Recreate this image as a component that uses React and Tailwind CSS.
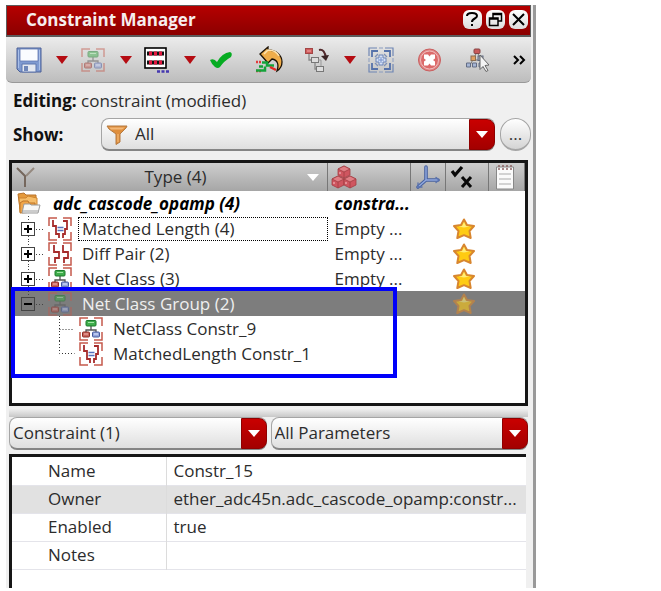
import React from "react";

const brackets = "M1 9V1h8M15 1h8v8M1 15v8h8M23 15v8h-8";

function NetClassIcon({ className = "" }) {
  return (
    <svg viewBox="0 0 24 24" className={`h-6 w-6 shrink-0 ${className}`} fill="none" aria-hidden="true">
      <path d={brackets} stroke="#c55a4c" strokeWidth="1.5" />
      <path d="M12 9v4M7 16v-3h10v3" stroke="#555" strokeWidth="1.3" />
      <rect x="7" y="3.5" width="10" height="5.5" rx="1" fill="#3fae4c" stroke="#1c7a2b" />
      <path d="M9 5.5h6" stroke="#a5e6a8" />
      <rect x="3.5" y="15" width="7" height="5" rx="1" fill="#c9645c" stroke="#8c2a22" />
      <rect x="13.5" y="15" width="7" height="5" rx="1" fill="#93a5dc" stroke="#44589c" />
      <path d="M5 17h4" stroke="#f0b5ae" />
      <path d="M15 17h4" stroke="#dfe6ff" />
    </svg>
  );
}

function MatchedLengthIcon() {
  return (
    <svg viewBox="0 0 24 24" className="h-6 w-6 shrink-0" fill="none" aria-hidden="true">
      <path d={brackets} stroke="#c55a4c" strokeWidth="1.5" />
      <path d="M5 3v6h3v8h3v4M15 4h4v8h-2v5h-2v4" stroke="#a62c2c" strokeWidth="1.8" />
      <path d="M9.500 10.500h6M9.500 13.500h6" stroke="#5571bd" strokeWidth="1.500" />
    </svg>
  );
}

function DiffPairIcon() {
  return (
    <svg viewBox="0 0 24 24" className="h-6 w-6 shrink-0" fill="none" aria-hidden="true">
      <path d={brackets} stroke="#c55a4c" strokeWidth="1.5" />
      <path d="M6 3v7h5v6H7v5M15 3v7h5v6h-4v5" stroke="#a62c2c" strokeWidth="1.800" />
    </svg>
  );
}

function FolderIcon() {
  return (
    <svg viewBox="0 0 26 24" className="h-6 w-[26px] shrink-0" aria-hidden="true">
      <path d="M2 2l6-1 2 2h10v14H4z" fill="#e59a3c" stroke="#b8722a" />
      <path d="M3 6h7l2-2 9 2v14H4z" fill="#f6bd69" stroke="#cd8530" />
      <path d="M4 21V11l3-2h5l1 2h6v9z" fill="#f0a548" stroke="#bd7427" />
      <path d="M8 12h6l1 1h9l-2 8H6z" fill="#f7f7f5" stroke="#999" />
      <path d="M7 19h15" stroke="#ccc" strokeWidth="2" />
    </svg>
  );
}

function StarIcon({ className = "" }) {
  return (
    <svg viewBox="0 0 24 24" className={`mx-auto h-6 w-6 ${className}`} aria-hidden="true">
      <path d="M12 2.500l3 5.500 7 1-4.500 5 1.200 7-6.700-2.800-6.700 2.800L6.500 14 2 9l7-1z" fill="#ffcb12" stroke="#d8862f" strokeWidth="2" strokeLinejoin="round" />
      <path d="M12 5l1.900 4 4 .6-5.900 1-5.500-1 3.600-.6z" fill="#ffed7a" />
    </svg>
  );
}

function FunnelIcon() {
  return (
    <svg viewBox="0 0 22 20" className="h-5 w-[22px]" aria-hidden="true">
      <path d="M1 1h20l-1 2-6 6v8l-4 2.500V9L3 4z" fill="#df8e3c" stroke="#b57b42" />
      <path d="M3 2.500h16l-3 2H5z" fill="#f3b878" />
      <path d="M12 9v8" stroke="#f1b26c" strokeWidth="1.400" />
    </svg>
  );
}

function SaveIcon() {
  return (
    <svg viewBox="0 0 26 26" className="h-[26px] w-[26px]" aria-hidden="true">
      <path d="M1 1h24v24H4l-3-3z" fill="#7f9ad0" stroke="#4a5f96" />
      <path d="M4 2h18v12H4z" fill="#fafcff" stroke="#5f76ae" strokeWidth=".8" />
      <path d="M6 17h14v8H6z" fill="#e4e8f0" stroke="#5f76ae" />
      <path d="M8 19h4v5H8z" fill="#6f86b8" />
      <path d="M2.500 3v18M23.500 3v20" stroke="#a9bfe8" />
    </svg>
  );
}

function ArrayIcon() {
  return (
    <svg viewBox="0 0 28 28" className="h-7 w-7" aria-hidden="true">
      <rect x="2" y="2" width="21" height="20" fill="#fff" stroke="#000" strokeWidth="1.600" />
      <path d="M4 5.500h17v4H4zM4 14.500h17v4H4z" fill="#111" />
      <path d="M6 5.500h3v4H6zM11 5.500h3v4h-3zM16 5.500h3v4h-3zM6 14.500h3v4H6zM11 14.500h3v4h-3zM16 14.500h3v4h-3z" fill="#e5173f" />
      <path d="M14 25.500h3M18.500 25.500h3M23 25.500h3" stroke="#4538b0" strokeWidth="2.400" />
    </svg>
  );
}

function CheckIcon() {
  return (
    <svg viewBox="0 0 28 28" className="h-7 w-7" aria-hidden="true">
      <path d="M3 14q4-2 7 2Q15 7 23 6q3 1 1 5-7 4-11 10-2 2-5 0-3-2-5-7z" fill="#06ac22" />
    </svg>
  );
}

function UndoIcon() {
  return (
    <svg viewBox="0 0 28 28" className="h-7 w-7" fill="none" aria-hidden="true">
      <path d="M5 8l8-7v3c8 0 14 5 14 12 0 4-2 7-5 9 2-6 1-11-5-12l-4 4z" fill="#efad4a" stroke="#1c1206" strokeWidth="1.300" />
      <path d="M9 8l4-4c5 0 9 2 11 6" stroke="#ffe3ad" strokeWidth="1.600" />
      <path d="M1 16h6M1 25h6" stroke="#e23b3b" strokeWidth="2.500" strokeDasharray="2 1" />
      <path d="M7 16.500h5v3h7M1 24.500h9v-4M4 20.500h4" stroke="#14a33a" strokeWidth="2.500" />
      <path d="M15 21l6 3" stroke="#e22a24" strokeWidth="2.500" />
    </svg>
  );
}

function HierarchyIcon() {
  return (
    <svg viewBox="0 0 28 28" className="h-7 w-7" fill="none" aria-hidden="true">
      <path d="M6 8v6h3M12 17v6h2" stroke="#888" strokeWidth="1.300" />
      <rect x="2.500" y="2.500" width="7" height="5" fill="#d05b5b" stroke="#a34646" />
      <path d="M4 5h4" stroke="#efaaaa" />
      <rect x="8.500" y="11.500" width="7" height="5" fill="#ddd" stroke="#777" />
      <rect x="13.500" y="20.500" width="7" height="5" fill="#ddd" stroke="#777" />
      <path d="M15 14h3v6" stroke="#999" />
      <path d="M16 4c4-1 6 2 7 8" stroke="#532a2c" strokeWidth="2" />
      <path d="M18 10l5 5 3-6z" fill="#3b2425" />
    </svg>
  );
}

function FitIcon() {
  return (
    <svg viewBox="0 0 28 28" className="h-7 w-7" fill="none" aria-hidden="true">
      <path d="M10 2H2v8M18 2h8v8M2 18v8h8M26 18v8h-8" stroke="#6f86b4" strokeWidth="1.200" />
      <path d="M12 2h4M12 26h4M2 12v4M26 12v4" stroke="#8a9cbf" />
      <path d="M5 11V5h6M17 5h6v6M5 17v6h6M23 17v6h-6" stroke="#5672aa" strokeWidth="1.800" />
      <path d="M8 11l3-3M20 11l-3-3M8 17l3 3M20 17l-3 3" stroke="#7d90b8" strokeWidth="1.300" />
      <path d="M12 9h4v3h3v4h-3v3h-4v-3H9v-4h3z" fill="#d5e0f5" stroke="#6b84b8" />
      <path d="M14 11v6M11 14h6" stroke="#7893cc" />
    </svg>
  );
}

function StopIcon() {
  return (
    <svg viewBox="0 0 28 28" className="h-7 w-7" aria-hidden="true">
      <circle cx="14.500" cy="14" r="11" fill="#e08484" stroke="#c95f5f" />
      <circle cx="14.500" cy="14" r="9" fill="#dc6a6a" stroke="#f0bcbc" />
      <path d="M9 8.500h4l1.500 2 1.500-2h4v4l-2 1.500 2 1.500v4h-4l-1.500-2-1.500 2H9v-4l2-1.500-2-1.500z" fill="#fff" />
    </svg>
  );
}

function SelectTreeIcon() {
  return (
    <svg viewBox="0 0 28 28" className="h-7 w-7" aria-hidden="true">
      <path d="M14 6L6 21M14 6l8 15M9 14h10" stroke="#777" fill="none" />
      <rect x="11" y="3" width="6" height="4.500" rx="1" fill="#c95a5a" stroke="#884545" />
      <rect x="8" y="10" width="4.500" height="4.500" fill="#e0a062" stroke="#8d6e50" />
      <rect x="15" y="10" width="5" height="4.500" fill="#a3a8b5" stroke="#616a80" />
      <path d="M3.500 17h4v4h-4zM9.500 17h4v4h-4zM16 17h4v4h-4z" fill="#a5b5d4" stroke="#626c84" />
      <path d="M17 9l9 10-4 .5 3 5-2 1-3-5-3 3z" fill="#f4f4f4" stroke="#666" />
    </svg>
  );
}

function CubesIcon() {
  return (
    <svg viewBox="0 0 26 24" className="h-6 w-[26px]" stroke="#a13c42" strokeWidth=".8" aria-hidden="true">
      {[[7, 1], [1, 11], [13, 11]].map(([x, y]) => (
        <g key={x} transform={`translate(${x} ${y})`}>
          <path d="M0 3l6-3 6 3v6l-6 3-6-3z" fill="#cf5660" />
          <path d="M0 3l6-3 6 3-6 3z" fill="#e07f85" />
          <path d="M6 6v6" fill="none" />
          <path d="M2 6v2" stroke="#eaa0a4" strokeWidth="1.500" />
        </g>
      ))}
    </svg>
  );
}

function AxesIcon() {
  return (
    <svg viewBox="0 0 26 26" className="h-[26px] w-[26px]" fill="none" strokeLinecap="round" aria-hidden="true">
      <path d="M11 3v13h12M11 16l-8 7" stroke="#48619f" strokeWidth="3.600" />
      <path d="M11 3v13h12M11 16l-8 7" stroke="#91a9df" strokeWidth="1.400" />
      <path d="M21 13.500l3 2.500-3 2.500M3 19v4h4" stroke="#5871ad" strokeWidth="1.300" />
    </svg>
  );
}

function CheckCrossIcon() {
  return (
    <svg viewBox="0 0 26 26" className="h-[26px] w-[26px]" fill="none" stroke="#080808" aria-hidden="true">
      <path d="M2 7l3 4 7-8" strokeWidth="3.200" />
      <path d="M12 13l9 10M21 13l-9 10" strokeWidth="3" />
    </svg>
  );
}

function NotepadIcon() {
  return (
    <svg viewBox="0 0 20 26" className="h-[26px] w-5" aria-hidden="true">
      <path d="M1.500 3h17v22h-17z" fill="#fafafa" stroke="#888" />
      <path d="M4 1v5M8 1v5M12 1v5M16 1v5" stroke="#8d6464" strokeWidth="1.500" strokeDasharray="2 1" />
      <path d="M4 10h12M4 15h12M4 20h12" stroke="#aaa" />
    </svg>
  );
}

function ToolButton({ label, className = "", children }) {
  return (
    <button type="button" aria-label={label} className={`flex h-7 w-7 shrink-0 items-center justify-center ${className}`}>
      {children}
    </button>
  );
}

function MenuArrow({ label }) {
  return (
    <button type="button" aria-label={label} className="ml-[11px] flex h-7 w-4 shrink-0 items-center justify-center">
      <svg viewBox="0 0 12 8" className="h-2 w-3" aria-hidden="true">
        <path d="M0 0h12L6 8z" fill="#b50c12" />
      </svg>
    </button>
  );
}

function Combo({ id, label, value, icon, className = "" }) {
  return (
    <div className={`relative h-[33px] min-w-0 ${className}`}>
      <select
        id={id}
        aria-label={label}
        className={`h-full w-full appearance-none rounded-lg border border-b-2 border-[#a5a5a5] border-b-[#858585] bg-linear-to-b from-white to-[#dfdfdf] pr-7 ${icon ? "pl-[33px]" : "pl-[3px]"}`}
      >
        <option>{value}</option>
      </select>
      {icon && <span className="pointer-events-none absolute top-[7px] left-[5px]">{icon}</span>}
      <span className="pointer-events-none absolute inset-y-px right-0 flex w-[26px] items-center justify-center rounded-r-lg border border-[#8f0000] bg-linear-to-b from-[#c90000] to-[#a30000]">
        <svg viewBox="0 0 12 7" className="h-[7px] w-3" aria-hidden="true">
          <path d="M0 0h12L6 7z" fill="#fff" />
        </svg>
      </span>
    </div>
  );
}

function Expander({ open }) {
  return (
    <svg viewBox="0 0 32 25" className="h-[25px] w-8 shrink-0" fill="none" aria-hidden="true">
      <path d={open ? "M12.500 0v6" : "M12.500 0v6M12.500 20v5"} stroke="#444" strokeDasharray="1 2" />
      <path d="M20 13.500h8" stroke="#444" strokeDasharray="1 2" />
      <rect x="5.500" y="6.500" width="13" height="13" fill={open ? "#7a7a7a" : "#fff"} stroke="#444" />
      <path d={open ? "M8 13h8" : "M8 13h8M12 9v8"} stroke="#000" strokeWidth="2" />
    </svg>
  );
}

function Branch({ last }) {
  return (
    <svg viewBox="0 0 24 25" className="ml-10 h-[25px] w-6 shrink-0" fill="none" aria-hidden="true">
      <path d={last ? "M4.500 0v12.500h15" : "M4.500 0v25M4.500 13.500h15"} stroke="#333" strokeDasharray="1 2" />
    </svg>
  );
}

const groups = [
  { name: "Matched Length (4)", icon: <MatchedLengthIcon />, focused: true },
  { name: "Diff Pair (2)", icon: <DiffPairIcon /> },
  { name: "Net Class (3)", icon: <NetClassIcon /> },
];

const members = [
  { name: "NetClass Constr_9", icon: <NetClassIcon /> },
  { name: "MatchedLength Constr_1", icon: <MatchedLengthIcon /> },
];

const properties = [
  ["Name", "Constr_15"],
  ["Owner", "ether_adc45n.adc_cascode_opamp:constr..."],
  ["Enabled", "true"],
  ["Notes", ""],
];

const windowButton = "flex h-[19px] w-[19px] items-center justify-center rounded-md bg-linear-to-b from-white to-[#dcdcdc]";
const headCell = "border-r border-[#777] p-0 font-normal";

function ConstraintTree() {
  return (
    <div className="relative mt-[9px] mr-[5px] ml-[3px] h-[246px] border-[3px] border-[#161616] bg-white">
      <table className="w-full table-fixed border-collapse">
        <colgroup>
          <col />
          <col className="w-[83px]" />
          <col className="w-[35px]" />
          <col className="w-[43px]" />
          <col className="w-[36px]" />
        </colgroup>
        <thead>
          <tr className="h-7 bg-linear-to-b from-[#cecece] to-[#a6a6a6]">
            <th className={headCell}>
              <div className="flex items-center pr-2 pl-1">
                <svg viewBox="0 0 20 22" className="h-[22px] w-5" fill="none" strokeWidth="2" aria-hidden="true">
                  <path d="M18 2l-8 8" stroke="#95897f" />
                  <path d="M1 2l8 8v11" stroke="#75675d" />
                </svg>
                <span className="flex-1 pl-2 text-center">Type (4)</span>
                <svg viewBox="0 0 12 7" className="h-[7px] w-3" aria-hidden="true">
                  <path d="M0 0h12L6 7z" fill="#fff" />
                </svg>
              </div>
            </th>
            <th aria-label="Members" className={headCell}><div className="pl-[3px]"><CubesIcon /></div></th>
            <th aria-label="Axis" className={headCell}><div className="flex justify-center"><AxesIcon /></div></th>
            <th aria-label="Status" className={headCell}><div className="pl-1"><CheckCrossIcon /></div></th>
            <th aria-label="Notes" className={headCell}><div className="flex pl-[6px]"><NotepadIcon /></div></th>
          </tr>
        </thead>
        <tbody>
          <tr className="h-[25px] font-bold text-black italic">
            <td className="p-0"><div className="flex h-[25px] items-center gap-[11px] pl-1"><FolderIcon />adc_cascode_opamp (4)</div></td>
            <td className="p-0 pl-[7px]">constra...</td>
            <td colSpan={3} className="p-0" />
          </tr>
          {groups.map((g) => (
            <tr key={g.name} className="h-[25px]">
              <td className="p-0">
                <div className="flex h-[25px] items-center pl-1">
                  <Expander />
                  {g.icon}
                  <span className={`ml-[6px] flex-1 pl-[3px] leading-[22px] ${g.focused ? "border border-dotted border-black" : "border border-transparent"}`}>{g.name}</span>
                </div>
              </td>
              <td className="p-0 pl-[7px]">Empty ...</td>
              <td className="p-0" />
              <td className="p-0"><div className="-ml-[6px]"><StarIcon /></div></td>
              <td className="p-0" />
            </tr>
          ))}
          <tr className="h-[25px] bg-[#7d7d7d] text-[#efefef]" aria-selected="true">
            <td className="p-0">
              <div className="flex h-[25px] items-center pl-1">
                <Expander open />
                <NetClassIcon className="opacity-50" />
                <span className="ml-[10px]">Net Class Group (2)</span>
              </div>
            </td>
            <td colSpan={2} className="p-0" />
            <td className="p-0"><div className="-ml-[6px]"><StarIcon className="opacity-60" /></div></td>
            <td className="p-0" />
          </tr>
          {members.map((m, i) => (
            <tr key={m.name} className="h-[25px]">
              <td colSpan={5} className="p-0">
                <div className="flex h-[25px] items-center pl-[3px]">
                  <Branch last={i === members.length - 1} />
                  {m.icon}
                  <span className="ml-[10px]">{m.name}</span>
                </div>
              </td>
            </tr>
          ))}
        </tbody>
      </table>
      <div className="pointer-events-none absolute top-[124px] -left-px h-[91px] w-[386px] border-4 border-[#0000fa]" />
    </div>
  );
}

export default function App() {
  return (
    <div className="bg-white pt-[5px] pr-[125px] pb-[3px] pl-[6px] font-['Open_Sans','Noto_Sans',sans-serif] text-[17px] leading-[22px] text-[#2c2c2c]">
      <main className="border-r-[3px] border-[#999] bg-[#f0f0f0]">
        <header className="mr-[2px] flex h-8 items-center border border-b-2 border-[#5c5c5c] bg-linear-to-b from-[#b50000] to-[#8c0000] pr-[2px] pb-[2px] pl-[19px]">
          <h1 className="flex-1 font-bold text-[#f6eeee]">Constraint Manager</h1>
          <div className="flex gap-1 text-black">
            <button type="button" aria-label="Help" className={windowButton}>
              <svg viewBox="0 0 19 19" className="h-[19px] w-[19px]" fill="none" stroke="#000" strokeWidth="2" aria-hidden="true">
                <path d="M4 6c0-4 10-4 10 0 0 3-5 2-5 6M9 14v2" />
              </svg>
            </button>
            <button type="button" aria-label="Restore" className={windowButton}>
              <svg viewBox="0 0 19 19" className="h-[19px] w-[19px]" fill="none" stroke="#000" strokeWidth="1.500" aria-hidden="true">
                <path d="M7 8V3.500h8.500V11H12M7 4.500h8M3.500 8H12v7.500H3.500zM3.500 9H12" />
              </svg>
            </button>
            <button type="button" aria-label="Close" className={windowButton}>
              <svg viewBox="0 0 19 19" className="h-[19px] w-[19px]" stroke="#000" strokeWidth="2" aria-hidden="true">
                <path d="M4 4l11 11M15 4L4 15" />
              </svg>
            </button>
          </div>
        </header>

        <div role="toolbar" aria-label="Constraint tools" className="mr-[2px] flex h-[46px] items-center rounded-b-md border-b border-[#999] bg-linear-to-b from-[#ececec] to-[#bdbdbd] pl-[9px]">
          <ToolButton label="Save"><SaveIcon /></ToolButton>
          <MenuArrow label="Save options" />
          <ToolButton label="New constraint" className="ml-[9px]"><NetClassIcon className="opacity-50" /></ToolButton>
          <MenuArrow label="New constraint options" />
          <ToolButton label="Array" className="ml-[9px]"><ArrayIcon /></ToolButton>
          <MenuArrow label="Array options" />
          <ToolButton label="Apply" className="ml-[9px]"><CheckIcon /></ToolButton>
          <ToolButton label="Revert" className="ml-5"><UndoIcon /></ToolButton>
          <ToolButton label="Hierarchy" className="ml-5"><HierarchyIcon /></ToolButton>
          <MenuArrow label="Hierarchy options" />
          <ToolButton label="Fit" className="ml-[9px]"><FitIcon /></ToolButton>
          <ToolButton label="Delete" className="ml-5"><StopIcon /></ToolButton>
          <ToolButton label="Select members" className="ml-5"><SelectTreeIcon /></ToolButton>
          <button type="button" aria-label="More tools" className="ml-5 flex h-7 w-4 shrink-0 items-center justify-center">
            <svg viewBox="0 0 14 10" className="h-[10px] w-[14px]" fill="none" stroke="#000" strokeWidth="2" aria-hidden="true">
              <path d="M2 1l4 4-4 4M8 1l4 4-4 4" />
            </svg>
          </button>
        </div>

        <p className="pt-[7px] pl-[7px]"><b className="text-[#111]">Editing:</b> constraint (modified)</p>

        <div className="mt-[6px] mr-[2px] flex items-center pl-[7px]">
          <label htmlFor="show" className="w-[88px] font-bold text-[#111]">Show:</label>
          <Combo id="show" value="All" icon={<FunnelIcon />} className="flex-1" />
          <button type="button" aria-label="More filters" className="ml-[5px] h-[33px] w-[31px] rounded-full border border-b-2 border-[#a5a5a5] bg-linear-to-b from-white to-[#d4d4d4] text-[#333]">...</button>
        </div>

        <ConstraintTree />

        <div className="mt-[2px] mr-[5px] ml-[3px] h-[9px] bg-linear-to-b from-[#f4f4f4] to-[#c8c8c8]" />

        <div className="mr-[5px] ml-[3px] flex gap-1">
          <Combo label="Constraint" value="Constraint (1)" className="flex-1" />
          <Combo label="Parameters" value="All Parameters" className="flex-1" />
        </div>

        <div className="mt-1 mr-[7px] ml-[3px] border-t-[3px] border-l-[3px] border-[#161616] bg-white pb-[18px]">
          <table className="w-full table-fixed border-collapse text-left">
            <tbody>
              {properties.map(([name, value], i) => (
                <tr key={name} className={`h-7 border-b border-[#e4e4ea] ${i === 1 ? "bg-[#e1e1e1]" : ""}`}>
                  <th scope="row" className="w-[154px] border-r border-[#dcdcdc] p-0 pl-9 font-normal">{name}</th>
                  <td className="truncate p-0 pl-[7px]">{value}</td>
                </tr>
              ))}
            </tbody>
          </table>
        </div>
      </main>
    </div>
  );
}
